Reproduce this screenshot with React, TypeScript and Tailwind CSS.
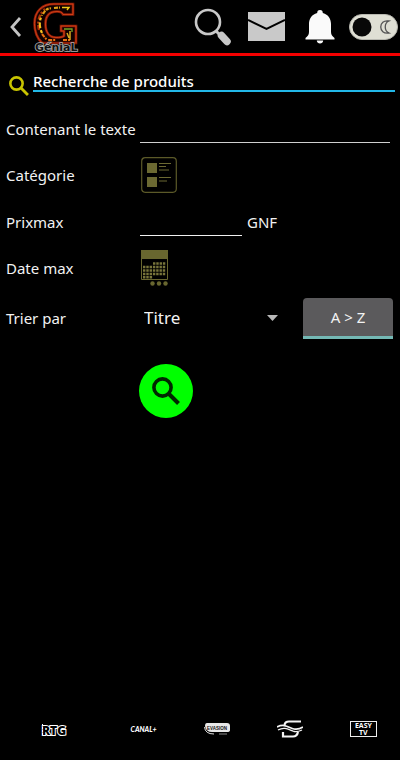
import React from "react";

function LogoG() {
  return (
    <svg width="48" height="54" viewBox="0 0 48 54" aria-label="Génial" role="img">
      <path
        d="M40 4V14.500H30C29 12 27 11.500 24 11.500C16 11.500 12.500 16 12.500 24C12.500 32 16 37.500 23 37.500C26 37.500 29 37.500 31 36V31H28V26H43V43H9C4 38 1.500 31 1.500 23.500C1.500 11 9.500 4 21 4Z"
        fill="#100000"
        stroke="#8c1c08"
        strokeWidth="2.600"
      />
      <path
        d="M40 4V14.500H30C29 12 27 11.500 24 11.500C16 11.500 12.500 16 12.500 24C12.500 32 16 37.500 23 37.500C26 37.500 29 37.500 31 36V31H28V26H43V43M9 43C4 38 1.500 31 1.500 23.500C1.500 11 9.500 4 21 4H40"
        fill="none"
        stroke="#e04818"
        strokeWidth="0.800"
      />
      <path d="M6 30C4 22 6 14 12 9" fill="none" stroke="#a83008" strokeWidth="2.400" strokeDasharray="5 1.500 2 2" />
      <path d="M9 33C6 27 6 21 9 15" fill="none" stroke="#f4c020" strokeWidth="2.200" strokeDasharray="3 2 6 2" />
      <path d="M10 14C12 10 15 8 18 8.500M21 8L27 7.500" fill="none" stroke="#e0a018" strokeWidth="2.200" strokeDasharray="4 1 3 1" />
      <path d="M29 7.500H36L34 10" fill="none" stroke="#f0c818" strokeWidth="1.400" />
      <path d="M9 34L14 40H24M30 40H37" fill="none" stroke="#e87010" strokeWidth="2" strokeDasharray="4 1 2 2" />
      <path d="M37 31V40M34 33L36 38" fill="none" stroke="#d8a820" strokeWidth="1.500" />
      <path d="M31 29H39V32" fill="none" stroke="#70a828" strokeWidth="1.300" />
      <text
        x="2"
        y="51"
        fontFamily="'DejaVu Sans', sans-serif"
        fontSize="11"
        fontWeight="700"
        fill="#111"
        stroke="#b0b0b0"
        strokeWidth="1.600"
        paintOrder="stroke"
      >
        GéniaL
      </text>
    </svg>
  );
}

function SearchGlyph({ size, color, className }: { size: number; color: string; className?: string }) {
  return (
    <svg className={className} width={size} height={size} viewBox="0 0 28 28" fill="none" stroke={color} aria-hidden="true">
      <circle cx="10.500" cy="10.500" r="8.600" strokeWidth="3.600" />
      <path d="M16.500 16.500L26.500 26.500" strokeWidth="4" />
    </svg>
  );
}

function Header() {
  return (
    <header className="flex h-14 items-center border-b-[3px] border-[#f50000] pl-2">
      <button aria-label="Retour" className="w-[25px]">
        <svg width="16" height="22" viewBox="0 0 16 22" fill="none" stroke="#c4c4c4" strokeWidth="2.800">
          <path d="M12 2L4 11L12 20" />
        </svg>
      </button>
      <LogoG />
      <div className="ml-auto flex items-center gap-4 pr-0.5">
        <button aria-label="Rechercher">
          <svg width="38" height="38" viewBox="0 0 38 38">
            <circle cx="14" cy="14" r="12" fill="none" stroke="#c8c8c8" strokeWidth="2.600" />
            <path d="M22 23L26 27" stroke="#c8c8c8" strokeWidth="3" />
            <path d="M27.500 27.500L33 33.500" stroke="#c8c8c8" strokeWidth="7.500" strokeLinecap="round" />
          </svg>
        </button>
        <button aria-label="Messages">
          <svg width="37" height="29" viewBox="0 0 37 29">
            <rect width="37" height="29" fill="#c9c9c9" />
            <path d="M0 8L18.500 17L37 8" fill="none" stroke="#000" strokeWidth="2" />
          </svg>
        </button>
        <button aria-label="Notifications" className="ml-1">
          <svg width="30" height="36" viewBox="0 0 30 36" fill="#fafafa">
            <path d="M15 1C13 1 12.200 2 12.200 4C6.500 5.500 4 10 4 15V23C4 26 2.500 27 0.500 29V30.500H29.500V29C27.500 27 26 26 26 23V15C26 10 23.500 5.500 17.800 4C17.800 2 17 1 15 1Z" />
            <path d="M11.800 31.500H18.200C18.200 35.500 11.800 35.500 11.800 31.500Z" />
          </svg>
        </button>
        <button aria-label="Mode sombre" className="-ml-0.5">
          <svg width="49" height="26" viewBox="0 0 49 26">
            <rect x="0.500" y="0.500" width="48" height="25" rx="12.500" fill="#dfdfd4" stroke="#b8b8b0" />
            <circle cx="13" cy="13" r="9.500" fill="#080808" />
            <path d="M40 7C29 5 29 21 40 19C35 17 35 9 40 7Z" fill="none" stroke="#555" strokeWidth="1.300" />
          </svg>
        </button>
      </div>
    </header>
  );
}

function CategoryIcon() {
  return (
    <svg width="36" height="36" viewBox="0 0 36 36" fill="#6b6932">
      <rect x="0.700" y="0.700" width="34.600" height="34.600" rx="3.500" fill="none" stroke="#5b5928" strokeWidth="1.200" />
      <path d="M6 6H16V16H6ZM6 20H16V30H6Z" />
      <path d="M18 6H30V7H18ZM18 9H25V10H18ZM18 12.500H28V13.500H18ZM18 20H30V21H18ZM18 23.500H26V24.500H18Z" />
    </svg>
  );
}

function CalendarIcon() {
  return (
    <svg width="28" height="36" viewBox="0 0 28 36" fill="#68662f">
      <path d="M0 0H27V9H0Z" />
      <path d="M0.500 8V29.500H26.500V8" fill="none" stroke="#68662f" />
      <g stroke="#77743a" strokeWidth="2.400" strokeDasharray="2.400 0.900">
        <path d="M12 13.500H25M2 17H25M2 20.500H25M2 24H25" />
        <path d="M2 27.300H12" />
      </g>
      <circle cx="11.500" cy="33.500" r="2.200" />
      <circle cx="18" cy="33.500" r="2.200" />
      <circle cx="24.500" cy="33.500" r="2.200" />
    </svg>
  );
}

function SearchForm() {
  const row = "grid h-[46px] grid-cols-[134px_1fr] items-center";
  return (
    <form className="pl-1.5 pt-3.5 text-[15px] leading-5" onSubmit={(e) => e.preventDefault()}>
      <div className={row}>
        <label htmlFor="texte" className="whitespace-nowrap">Contenant le texte</label>
        <input id="texte" className="mr-2.5 h-7 border-b border-[#d0d0d0] bg-transparent outline-none" />
      </div>
      <div className={row}>
        <span>Catégorie</span>
        <button type="button" aria-label="Choisir une catégorie" className="ml-px w-9">
          <CategoryIcon />
        </button>
      </div>
      <div className="grid h-12 grid-cols-[134px_1fr] items-center">
        <label htmlFor="prix">Prixmax</label>
        <div className="flex items-center gap-[5px]">
          <input id="prix" className="h-7 w-[102px] border-b border-[#f0f0f0] bg-transparent outline-none" />
          <span>GNF</span>
        </div>
      </div>
      <div className="grid h-11 grid-cols-[134px_1fr] items-center">
        <span>Date max</span>
        <button type="button" aria-label="Choisir une date" className="ml-px w-7">
          <CalendarIcon />
        </button>
      </div>
      <div className="grid h-14 grid-cols-[134px_1fr] items-center">
        <label htmlFor="tri">Trier par</label>
        <div className="flex items-center pr-[7px]">
          <div className="grid flex-1 items-center">
            <select id="tri" className="col-start-1 row-start-1 h-10 appearance-none bg-transparent pl-1 text-[17px] outline-none">
              <option>Titre</option>
            </select>
            <svg className="pointer-events-none col-start-1 row-start-1 mr-[25px] justify-self-end" width="11" height="6" viewBox="0 0 11 6">
              <path d="M0 0H11L5.500 6Z" fill="#b8b8b8" />
            </svg>
          </div>
          <button type="button" className="h-[41px] w-[90px] rounded-t-sm border-b-[3px] border-[#74b8b4] bg-[#5b5a5c]">
            A &gt; Z
          </button>
        </div>
      </div>
      <button aria-label="Lancer la recherche" className="ml-[133px] mt-[18px] flex size-[54px] items-center justify-center rounded-full bg-[#00ff00]">
        <SearchGlyph size={28} color="#002800" />
      </button>
    </form>
  );
}

function Footer() {
  return (
    <footer className="grid h-[62px] grid-cols-[107px_repeat(4,1fr)] items-center justify-items-center text-white">
      <a href="#rtg" aria-label="RTG">
        <svg width="28" height="18" viewBox="0 0 28 18">
          <text x="2" y="15" fontFamily="'Open Sans', sans-serif" fontSize="12" fontWeight="800" fill="#000" stroke="#fff" strokeWidth="2" paintOrder="stroke">RTG</text>
          <path d="M2.500 4V15" stroke="#fff" strokeDasharray="2 1" />
        </svg>
      </a>
      <a href="#canal" className="font-['Lato',sans-serif] text-[7px] font-black italic leading-none">CANAL+</a>
      <a href="#evasion" aria-label="Evasion">
        <svg width="26" height="14" viewBox="0 0 26 14">
          <path d="M3 1H23Q26 1 26 4V8Q26 10 23 10H8Q2 10 1 4Q1 1 3 1Z" fill="#e8e8e8" />
          <path d="M0.500 5Q1 12 10 12" fill="none" stroke="#ddd" />
          <path d="M15 12H23" stroke="#888" />
          <text x="3" y="7.500" fontFamily="'Liberation Sans', sans-serif" fontSize="4.500" fontWeight="700" fill="#111">EVASION</text>
        </svg>
      </a>
      <a href="#chaine" aria-label="Chaîne S">
        <svg width="26" height="18" viewBox="0 0 26 18" fill="none" stroke="#f4f4f4">
          <path d="M24 1.500H12Q8 1.500 7.500 5" strokeWidth="2.200" />
          <path d="M0 7C8 3 12 8 17 9C20 9.500 23 9 26 7" strokeWidth="1.700" />
          <path d="M1 10C8 6 12 10 17 11.500C20 12 23 11 25 10" strokeWidth="1.300" />
          <path d="M21 12Q20 16.500 16 16.500H6V12" strokeWidth="2.200" />
        </svg>
      </a>
      <a href="#easytv" className="flex h-4 w-[27px] flex-col items-center justify-center border border-[#eee] font-['Open_Sans',sans-serif] text-[7px] font-bold leading-[7px]">
        <span>EASY</span>
        <span>TV</span>
      </a>
    </footer>
  );
}

export default function App() {
  return (
    <div className="flex min-h-screen flex-col bg-black font-['Noto_Sans',sans-serif] text-[#f2f2f2]">
      <Header />
      <main className="flex-1">
        <div className="flex items-end pl-[9px] pr-[5px] pt-4">
          <SearchGlyph size={20} color="#c8c400" className="mr-1 translate-y-1" />
          <h1 className="flex-1 border-b-2 border-[#22b8e8] text-[15px] font-medium leading-[18px] text-white">
            Recherche de produits
          </h1>
        </div>
        <SearchForm />
      </main>
      <Footer />
    </div>
  );
}
